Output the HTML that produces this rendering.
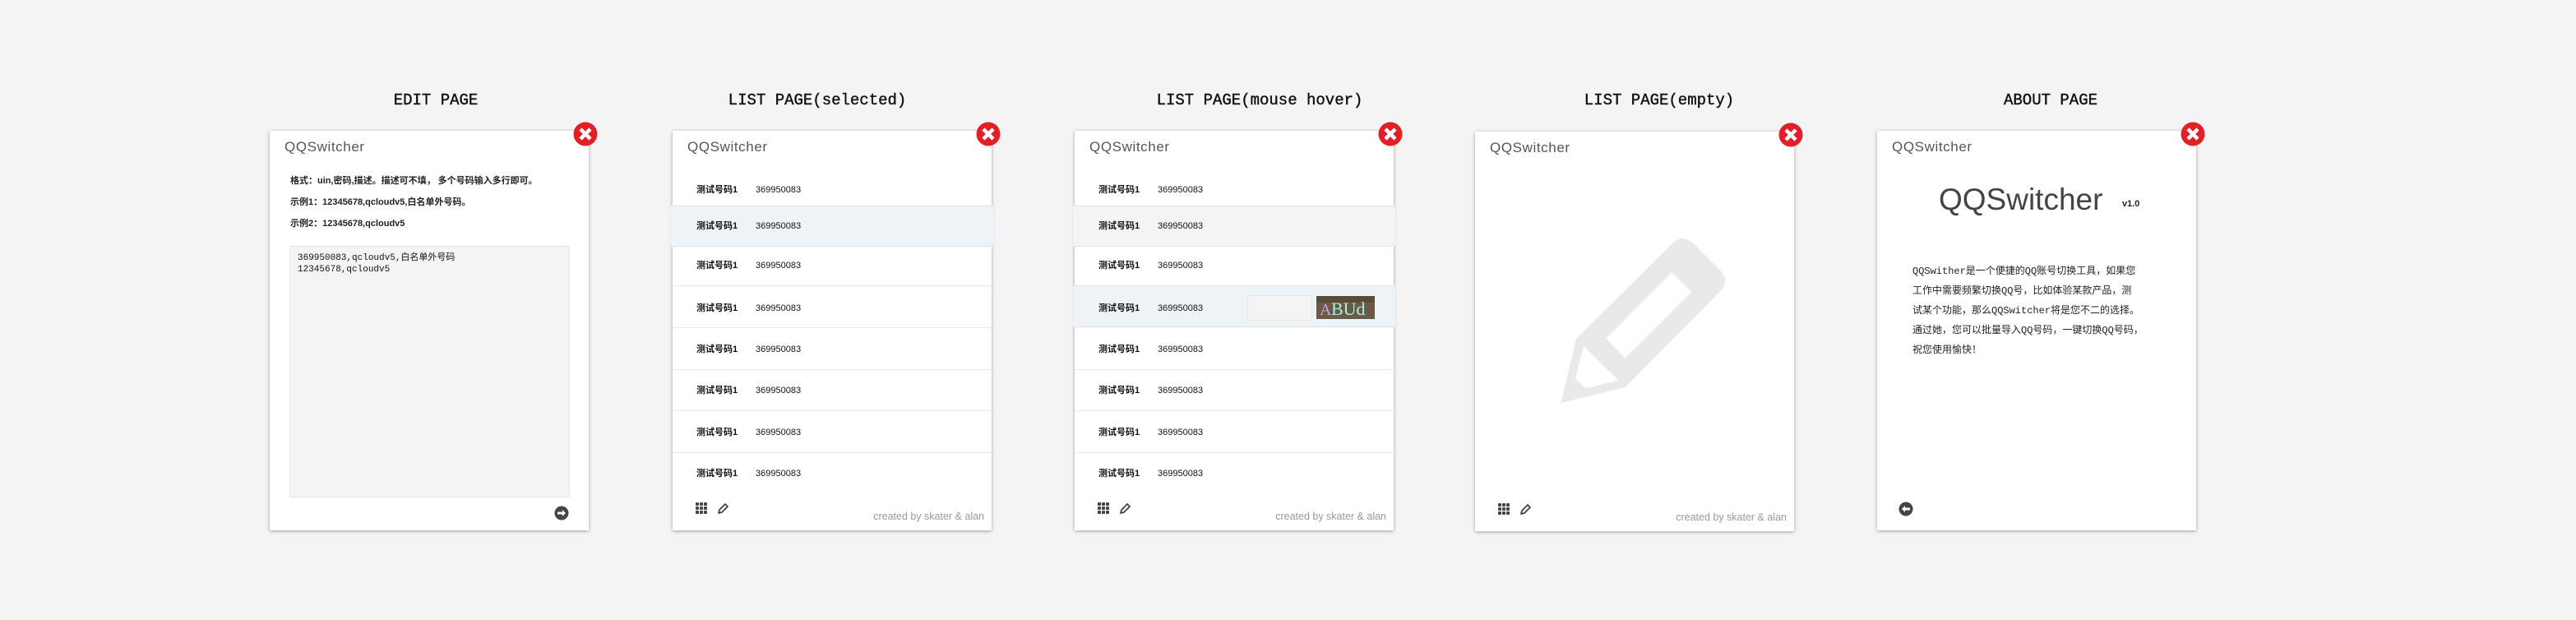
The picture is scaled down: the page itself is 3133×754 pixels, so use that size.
<!DOCTYPE html>
<html><head><meta charset="utf-8">
<style>
*{margin:0;padding:0;box-sizing:border-box}
body{width:3133px;height:754px;background:#f4f4f4;position:relative;overflow:hidden;font-family:"Liberation Sans","Noto Sans CJK SC",sans-serif}
.t{position:absolute;top:108px;font-family:"Liberation Mono","Noto Sans CJK SC",monospace;font-size:19px;color:#111;transform:translateX(-50%);white-space:nowrap;line-height:28px;-webkit-text-stroke:0.4px #111}
.p{position:absolute;top:159px;width:388px;height:486px;background:#fff;box-shadow:0 1px 4px rgba(0,0,0,.35)}
.h{position:absolute;left:18px;top:8px;font-size:17px;line-height:24px;color:#555;letter-spacing:.6px;font-weight:normal}
.x{position:absolute;right:-11px;top:-11px;width:30px;height:30px}
.r{position:absolute;left:0;width:388px;height:16px;font-size:11px;color:#111}
.r .n{position:absolute;left:29px;top:0;line-height:16px;font-weight:bold}
.r .m{position:absolute;left:101px;top:0;line-height:16px}
.ln{position:absolute;left:0;width:388px;height:1px;background:#e6e6e6}
.cr{position:absolute;right:9px;top:461px;font-size:12.5px;color:#999;line-height:16px}
.ic{position:absolute;top:450px;left:26px}
</style></head><body>

<div class="t" style="left:530px">EDIT PAGE</div>
<div class="t" style="left:994px">LIST PAGE(selected)</div>
<div class="t" style="left:1532px">LIST PAGE(mouse hover)</div>
<div class="t" style="left:2018px">LIST PAGE(empty)</div>
<div class="t" style="left:2494px">ABOUT PAGE</div>

<!-- EDIT -->
<div class="p" style="left:328px">
 <div class="h">QQSwitcher</div>
 <div style="position:absolute;left:25px;top:48px;font-size:11px;line-height:26px;color:#222;font-weight:bold">
  格式：uin,密码,描述。描述可不填， 多个号码输入多行即可。<br>示例1：12345678,qcloudv5,白名单外号码。<br>示例2：12345678,qcloudv5</div>
 <div style="position:absolute;left:24px;top:140px;width:341px;height:306px;background:#f4f4f4;border:1px solid #e4e4e4;font-family:'Liberation Mono','Noto Sans CJK SC',monospace;font-size:11px;line-height:14px;color:#111;padding:7px 9px">369950083,qcloudv5,白名单外号码<br>12345678,qcloudv5</div>
 <svg style="position:absolute;left:346px;top:456px" width="18" height="18" viewBox="0 0 18 18"><circle cx="9" cy="9" r="8.5" fill="#444"/><path d="M4 7.5h6V5l4 4-4 4v-2.5H4z" fill="#fff"/></svg>
 <svg class="x" viewBox="0 0 30 30"><circle cx="15" cy="15" r="14.5" fill="#e01f26"/><path d="M9 9l12 12M21 9L9 21" stroke="#fff" stroke-width="4.5"/></svg>
</div>

<!-- LIST SELECTED -->
<div class="p" style="left:818px">
 <div class="h">QQSwitcher</div>
 <div style="position:absolute;left:-2px;top:91px;width:392px;height:50px;background:#eef3f7;border-top:1px solid #dde3e8;border-bottom:1px solid #dde3e8"></div>
 <div class="ln" style="top:188px"></div><div class="ln" style="top:239px"></div><div class="ln" style="top:290px"></div><div class="ln" style="top:340px"></div><div class="ln" style="top:391px"></div>
 <div class="r" style="top:64px"><span class="n">测试号码1</span><span class="m">369950083</span></div>
 <div class="r" style="top:108px"><span class="n">测试号码1</span><span class="m">369950083</span></div>
 <div class="r" style="top:156px"><span class="n">测试号码1</span><span class="m">369950083</span></div>
 <div class="r" style="top:208px"><span class="n">测试号码1</span><span class="m">369950083</span></div>
 <div class="r" style="top:258px"><span class="n">测试号码1</span><span class="m">369950083</span></div>
 <div class="r" style="top:308px"><span class="n">测试号码1</span><span class="m">369950083</span></div>
 <div class="r" style="top:359px"><span class="n">测试号码1</span><span class="m">369950083</span></div>
 <div class="r" style="top:409px"><span class="n">测试号码1</span><span class="m">369950083</span></div>
 <svg class="ic" width="46" height="18" viewBox="0 0 46 18"><g fill="#444"><rect x="2" y="2" width="4" height="4" rx="1"/><rect x="7" y="2" width="4" height="4" rx="1"/><rect x="12" y="2" width="4" height="4" rx="1"/><rect x="2" y="7" width="4" height="4" rx="1"/><rect x="7" y="7" width="4" height="4" rx="1"/><rect x="12" y="7" width="4" height="4" rx="1"/><rect x="2" y="12" width="4" height="4" rx="1"/><rect x="7" y="12" width="4" height="4" rx="1"/><rect x="12" y="12" width="4" height="4" rx="1"/></g><path d="M30 15l1-4 7-7 3 3-7 7z" fill="none" stroke="#444" stroke-width="1.8" stroke-linejoin="round"/></svg>
 <div class="cr">created by skater &amp; alan</div>
 <svg class="x" viewBox="0 0 30 30"><circle cx="15" cy="15" r="14.5" fill="#e01f26"/><path d="M9 9l12 12M21 9L9 21" stroke="#fff" stroke-width="4.5"/></svg>
</div>

<!-- LIST HOVER -->
<div class="p" style="left:1307px">
 <div class="h">QQSwitcher</div>
 <div style="position:absolute;left:-2px;top:91px;width:392px;height:50px;background:#f4f4f4;border-top:1px solid #e2e2e2;border-bottom:1px solid #e2e2e2"></div>
 <div style="position:absolute;left:-2px;top:188px;width:392px;height:51px;background:#eef3f7;border-top:1px solid #dde3e8;border-bottom:1px solid #dde3e8"></div>
 <div style="position:absolute;left:210px;top:200px;width:79px;height:31px;background:#f4f4f4;border:1px solid #e4e4e4"></div>
 <svg style="position:absolute;left:294px;top:201px" width="71" height="28" viewBox="0 0 71 28"><rect width="71" height="28" fill="#6b5a45"/><rect y="0" width="71" height="8" fill="#5a4a38"/><text x="4" y="23" font-family="Liberation Serif,serif" font-size="20" fill="#c9a3e0">A</text><text x="18" y="23" font-family="Liberation Serif,serif" font-size="22" fill="#a8f0e8">BUd</text></svg>
 <div class="ln" style="top:290px"></div><div class="ln" style="top:340px"></div><div class="ln" style="top:391px"></div>
 <div class="r" style="top:64px"><span class="n">测试号码1</span><span class="m">369950083</span></div>
 <div class="r" style="top:108px"><span class="n">测试号码1</span><span class="m">369950083</span></div>
 <div class="r" style="top:156px"><span class="n">测试号码1</span><span class="m">369950083</span></div>
 <div class="r" style="top:208px"><span class="n">测试号码1</span><span class="m">369950083</span></div>
 <div class="r" style="top:258px"><span class="n">测试号码1</span><span class="m">369950083</span></div>
 <div class="r" style="top:308px"><span class="n">测试号码1</span><span class="m">369950083</span></div>
 <div class="r" style="top:359px"><span class="n">测试号码1</span><span class="m">369950083</span></div>
 <div class="r" style="top:409px"><span class="n">测试号码1</span><span class="m">369950083</span></div>
 <svg class="ic" width="46" height="18" viewBox="0 0 46 18"><g fill="#444"><rect x="2" y="2" width="4" height="4" rx="1"/><rect x="7" y="2" width="4" height="4" rx="1"/><rect x="12" y="2" width="4" height="4" rx="1"/><rect x="2" y="7" width="4" height="4" rx="1"/><rect x="7" y="7" width="4" height="4" rx="1"/><rect x="12" y="7" width="4" height="4" rx="1"/><rect x="2" y="12" width="4" height="4" rx="1"/><rect x="7" y="12" width="4" height="4" rx="1"/><rect x="12" y="12" width="4" height="4" rx="1"/></g><path d="M30 15l1-4 7-7 3 3-7 7z" fill="none" stroke="#444" stroke-width="1.8" stroke-linejoin="round"/></svg>
 <div class="cr">created by skater &amp; alan</div>
 <svg class="x" viewBox="0 0 30 30"><circle cx="15" cy="15" r="14.5" fill="#e01f26"/><path d="M9 9l12 12M21 9L9 21" stroke="#fff" stroke-width="4.5"/></svg>
</div>

<!-- EMPTY -->
<div class="p" style="left:1794px;top:160px">
 <div class="h">QQSwitcher</div>
 <svg class="ic" width="46" height="18" viewBox="0 0 46 18"><g fill="#444"><rect x="2" y="2" width="4" height="4" rx="1"/><rect x="7" y="2" width="4" height="4" rx="1"/><rect x="12" y="2" width="4" height="4" rx="1"/><rect x="2" y="7" width="4" height="4" rx="1"/><rect x="7" y="7" width="4" height="4" rx="1"/><rect x="12" y="7" width="4" height="4" rx="1"/><rect x="2" y="12" width="4" height="4" rx="1"/><rect x="7" y="12" width="4" height="4" rx="1"/><rect x="12" y="12" width="4" height="4" rx="1"/></g><path d="M30 15l1-4 7-7 3 3-7 7z" fill="none" stroke="#444" stroke-width="1.8" stroke-linejoin="round"/></svg>
 <div class="cr">created by skater &amp; alan</div>
 <svg class="x" viewBox="0 0 30 30"><circle cx="15" cy="15" r="14.5" fill="#e01f26"/><path d="M9 9l12 12M21 9L9 21" stroke="#fff" stroke-width="4.5"/></svg>
</div>
<svg style="position:absolute;left:1780px;top:140px" width="420" height="520" viewBox="0 0 1260 1560">
 <path d="M355 1050 L412 815 L760 470 Q800 430 840 470 L935 565 Q975 605 935 645 L590 993 Z" fill="#e9e9e9"/>
 <path d="M520 815 L760 573 L832 645 L590 887 Z" fill="#fff"/>
 <path d="M438 842 L565 968 L445 997 L408 960 Z" fill="#fff"/>
</svg>

<!-- ABOUT -->
<div class="p" style="left:2283px">
 <div class="h">QQSwitcher</div>
 <div style="position:absolute;left:75px;top:60px;font-size:37px;line-height:48px;color:#444">QQSwitcher</div>
 <div style="position:absolute;left:298px;top:83px;font-size:11px;font-weight:bold;color:#222">v1.0</div>
 <div style="position:absolute;left:43px;top:159px;font-size:12px;line-height:24px;color:#222;white-space:nowrap;font-family:'Liberation Mono','Noto Sans CJK SC',monospace">QQSwither是一个便捷的QQ账号切换工具，如果您<br>工作中需要频繁切换QQ号，比如体验某款产品，测<br>试某个功能，那么QQSwitcher将是您不二的选择。<br>通过她，您可以批量导入QQ号码，一键切换QQ号码，<br>祝您使用愉快！</div>
 <svg style="position:absolute;left:26px;top:451px" width="18" height="18" viewBox="0 0 18 18"><circle cx="9" cy="9" r="8.5" fill="#444"/><path d="M14 7.5H8V5L4 9l4 4v-2.5h6z" fill="#fff"/></svg>
 <svg class="x" viewBox="0 0 30 30"><circle cx="15" cy="15" r="14.5" fill="#e01f26"/><path d="M9 9l12 12M21 9L9 21" stroke="#fff" stroke-width="4.5"/></svg>
</div>

</body></html>
